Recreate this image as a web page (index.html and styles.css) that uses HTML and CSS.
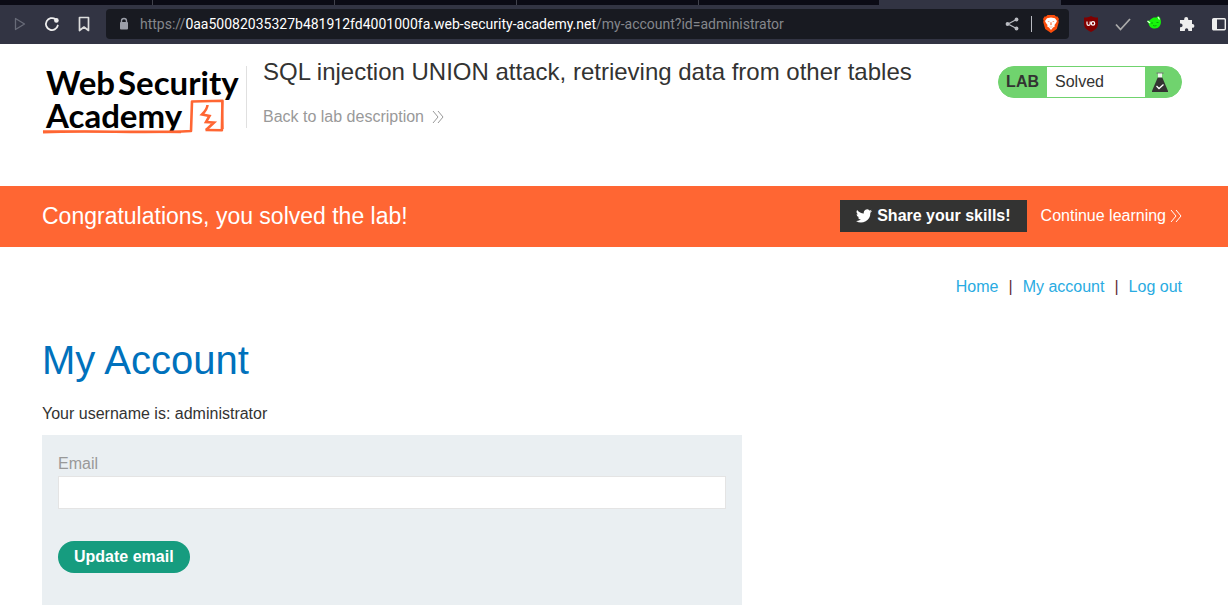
FILE: index.html
```html
<!DOCTYPE html>
<html lang="en">
<head>
<meta charset="utf-8">
<meta name="viewport" content="width=device-width, initial-scale=1">
<title>SQL injection UNION attack, retrieving data from other tables</title>
<link rel="stylesheet" href="styles.css">
</head>
<body>
<div class="browser">
  <div class="tabs"><span class="tab tab-first"></span><span class="tab"></span><span class="tab"></span><span class="tab"></span><span class="tab tab-last"></span><span class="tab tab-active"></span></div>
  <div class="toolbar">
    <div class="tools tools-left">
      <button class="tool" aria-label="Forward"><svg width="16" height="16" viewBox="0 0 16 16"><path d="M3.500 2.500v11l9-5.500z" fill="none" stroke="#686b78" stroke-width="1.300" stroke-linejoin="round"/></svg></button>
      <button class="tool" aria-label="Reload"><svg width="16" height="16" viewBox="0 0 16 16"><path d="M11.500 3.200A6 6 0 1 0 13.800 9.500" fill="none" stroke="#eee" stroke-width="1.800" stroke-linecap="round"/><circle cx="12.400" cy="4.400" r="2.300" fill="#eee"/></svg></button>
      <button class="tool" aria-label="Bookmark"><svg width="16" height="16" viewBox="0 0 16 16"><path d="M3.500 1.500h9v13L8 11l-4.500 3.500z" fill="none" stroke="#ddd" stroke-width="1.700" stroke-linejoin="round"/></svg></button>
    </div>
    <div class="address">
      <svg width="12" height="14" viewBox="0 0 12 14"><path d="M3.500 6V4a2.500 2.500 0 0 1 5 0v2" fill="none" stroke="#9b9ea8" stroke-width="1.400"/><rect x="2" y="5" width="8" height="7.500" rx="1" fill="#9b9ea8"/></svg>
      <span class="url">https://<span class="host">0aa50082035327b481912fd4001000fa.web-security-academy.net</span>/my-account?id=administrator</span>
      <button class="tool" aria-label="Share"><svg width="16" height="16" viewBox="0 0 16 16"><path d="M12.500 3.500L4 8l8.500 4.500" fill="none" stroke="#b9bbc1" stroke-width="1.300"/><circle cx="12.500" cy="3.500" r="1.900" fill="#b9bbc1"/><circle cx="3.500" cy="8" r="1.900" fill="#b9bbc1"/><circle cx="12.500" cy="12.500" r="1.900" fill="#b9bbc1"/></svg></button>
      <span class="rule"></span>
      <button class="tool" aria-label="Brave Shields"><svg width="16" height="18" viewBox="0 0 16 18"><path d="M4.500 0h7l1.500 1.600 1.500-.1L16 4l-.6 1.500.4 1.500-2 7L8 18l-5.800-4-2-7 .4-1.500L0 4l1.500-2.500 1.500.1z" fill="#fb4c0a"/><path d="M4 3.200L8 2.600l4 .6L14 6l-1 2-1.500 2 .3 1.500-1.800 1L8 15l-2-2.500-1.800-1 .3-1.500L3 8 2 6z" fill="#fff"/><path d="M4.500 6l2 .5-.4.800zM11.500 6l-2 .5.400.800zM7.700 7h.6l.3 2.500-.6 1-.6-1zM6 11.300l2 .6 2-.6-2 1.200z" fill="#fb4c0a"/></svg></button>
    </div>
    <div class="tools tools-right">
      <button class="tool" aria-label="uBlock Origin"><svg width="16" height="16" viewBox="0 0 16 16"><path d="M8 0c2 1.400 4 1.500 7 1.500v6C15 12 12 14 8 16 4 14 1 12 1 7.500v-6C4 1.500 6 1.400 8 0z" fill="#800000"/><path d="M4 5.500v2.200a1.600 1.600 0 0 0 3.200 0V5.500" fill="none" stroke="#fff" stroke-width="1.200"/><circle cx="10" cy="7.400" r="1.700" fill="none" stroke="#fff" stroke-width="1.200"/></svg></button>
      <button class="tool" aria-label="Checker"><svg width="16" height="16" viewBox="0 0 16 16"><path d="M1 8.500l4.500 5L15 3" fill="none" stroke="#aaa" stroke-width="1.800"/></svg></button>
      <button class="tool" aria-label="Green face extension"><svg width="16" height="16" viewBox="0 0 16 16"><path d="M4 3l2.500-1.500h3L11 0l2 1.500.8 3c.8 4.500-2 8-6 8C4.500 12.500 2 10.500 1.600 7.500L0 5l2.500-.5z" fill="#16f50a"/><path d="M.5 5l2.500 2M11 1l1.500 2.500" stroke="#dfffdc" stroke-width="1.300"/><path d="M4 7h2M9.500 6.500h2M6 9.500q2 1 3.500 0" fill="none" stroke="#0ba50a"/></svg></button>
      <button class="tool" aria-label="Extensions"><svg width="16" height="16" viewBox="0 0 16 16"><path d="M1 4h4.200V3a2 2 0 0 1 4 0v1H13v4h.5a1.900 1.900 0 0 1 0 3.800H13V15H9.300v-1a1.700 1.700 0 0 0-3.400 0v1H1v-3.800h.8a1.800 1.800 0 0 0 0-3.600H1z" fill="#eee"/></svg></button>
      <button class="tool" aria-label="Side panel"><svg width="16" height="16" viewBox="0 0 16 16"><rect x="1.700" y="2.700" width="12.600" height="11" rx="1" fill="none" stroke="#eee" stroke-width="1.400"/><path d="M2 3h4v10.500H2z" fill="#eee"/></svg></button>
    </div>
  </div>
</div>

<header class="lab-header">
  <a class="logo" href="#" aria-label="Web Security Academy">
    <span class="logo-line"><span>Web</span><span>Security</span></span>
    <span class="logo-line">Academy</span>
    <svg class="logo-mark" width="184" height="38" viewBox="0 0 184 38" fill="none" stroke="#ff6633"><path d="M1 33.200C50 31 100 34.500 149 32l1-29.500 30.500-.7-.6 29.500-16.400-.3" stroke-width="2.600" stroke-linejoin="round"/><path d="M1 32l138 1.500M180 2l1 28" stroke-width="1.400"/><path d="M165.500 6c-.2 3-1 5-5.500 9.500l7.500 1.500-3.500 6 8 .5-8 7.500" stroke-width="2.600"/></svg>
  </a>
  <div class="lab-title">
    <h2>SQL injection UNION attack, retrieving data from other tables</h2>
    <a class="back" href="#">Back to lab description <svg width="12" height="14" viewBox="0 0 12 14"><path d="M1 1l5 6-5 6M6 1l5 6-5 6" fill="none" stroke="#999"/></svg></a>
  </div>
  <div class="status"><strong>LAB</strong><span class="status-text">Solved</span>
    <svg width="36" height="30" viewBox="0 0 36 30"><path d="M11.500 5.500h7v1.200h-7z" fill="#777"/><path d="M13 6.500h4v5h-4z" fill="#eef5ee"/><path d="M12.700 10.500h4.600L23 24v1H7v-1z" fill="#333332"/><path d="M11.500 19l2.500 2.500 4.500-4" fill="none" stroke="#fff" stroke-width="1.300"/></svg>
  </div>
</header>

<section class="banner">
  <p class="banner-text">Congratulations, you solved the lab!</p>
  <button class="share"><svg width="16" height="14" viewBox="0 0 24 20"><path d="M24 2.400a9.800 9.800 0 0 1-2.800.8A4.900 4.900 0 0 0 23.300.5a9.900 9.900 0 0 1-3.100 1.200 4.900 4.900 0 0 0-8.400 4.500A14 14 0 0 1 1.700 1a4.900 4.900 0 0 0 1.500 6.600A4.900 4.900 0 0 1 1 7v.1a4.900 4.900 0 0 0 4 4.800 4.900 4.900 0 0 1-2.300.1 4.900 4.900 0 0 0 4.600 3.400A9.900 9.900 0 0 1 0 17.500a14 14 0 0 0 21.500-12.400A10 10 0 0 0 24 2.400z" fill="#fff"/></svg>Share your skills!</button>
  <a class="continue" href="#">Continue learning <svg width="12" height="14" viewBox="0 0 12 14"><path d="M1 1l5 6-5 6M6 1l5 6-5 6" fill="none" stroke="#fff"/></svg></a>
</section>

<main class="content">
  <nav class="links"><a href="#">Home</a><span>|</span><a href="#">My account</a><span>|</span><a href="#">Log out</a></nav>
  <h1>My Account</h1>
  <p class="username">Your username is: administrator</p>
  <form class="card">
    <label for="email">Email</label>
    <input id="email" type="email" name="email">
    <button class="update" type="button">Update email</button>
  </form>
</main>
</body>
</html>
```

FILE: styles.css
```css
* { box-sizing: border-box; }
body { margin: 0; background: #fff; color: #333332; font: 16px/24px "Liberation Sans", Arial, sans-serif; }
h1, h2, p { margin: 0; font-weight: 400; }
a { text-decoration: none; }
button { border: 0; padding: 0; background: none; font: inherit; cursor: pointer; }
svg { display: block; flex: none; }

.browser { background: #323443; overflow: hidden; }
.tabs { display: flex; height: 5px; background: #0b0b15; }
.tab { flex: 0 0 182px; border-right: 1px solid #41424c; }
.tab-first { flex-basis: 153px; }
.tab-last { flex-basis: 180px; border: 0; }
.tab-active { background: #323443; border: 0; }
.toolbar { display: flex; align-items: center; padding: 4px 0 5px; }
.tools { display: flex; gap: 16px; flex: none; }
.tools-left { padding: 0 14px 0 12px; }
.tools-right { padding: 0 1px 0 14px; }
.address { flex: 1; min-width: 0; height: 30px; display: flex; align-items: center; padding: 0 10px 0 12px; background: #181a21; border-radius: 4px; }
.url { flex: 1; min-width: 0; overflow: hidden; white-space: nowrap; margin-left: 10px; color: #85878c; font: 14px/20px Roboto, sans-serif; }
.host { color: #fff; }
.rule { width: 1px; height: 16px; margin: 0 11px; background: #b9bbc1; }

.lab-header { display: flex; align-items: flex-start; min-height: 142px; padding: 16px 46px 0 42px; }
.logo { position: relative; flex: none; width: 205px; height: 62px; margin-top: 6px; padding-left: 4px; border-right: 1px solid #e0e0e0; color: #000; font: 700 33px/33px Lato, sans-serif; }
.logo-line { display: flex; gap: 3px; }
.logo-mark { position: absolute; left: 0; top: 33px; }
.lab-title { flex: 1; margin-left: 16px; }
.lab-title h2 { font-size: 24px; line-height: 24px; }
.back { display: inline-flex; align-items: center; gap: 8px; margin-top: 21px; color: #999; }
.status { display: flex; align-items: center; height: 32px; margin-top: 6px; border: 1px solid #70d36e; border-radius: 16px; background: #70d36e; overflow: hidden; }
.status strong { padding: 0 8px 0 7px; }
.status-text { width: 98px; height: 30px; padding-left: 8px; background: #fff; line-height: 30px; }

.banner { display: flex; align-items: center; padding: 14px 46px 15px 42px; background: #ff6633; color: #fff; }
.banner-text { flex: 1; font-size: 23px; }
.share { display: flex; align-items: center; gap: 5px; height: 32px; padding: 0 16px; background: #333332; color: #fff; font-weight: 700; }
.continue { display: flex; align-items: center; gap: 4px; margin-left: 14px; color: #fff; }

.content { padding: 28px 46px 6px 42px; }
.links { display: flex; justify-content: flex-end; gap: 10px; }
.links a { color: #29abe2; }
.links span { color: #632f35; }
h1 { margin-top: 37px; color: #0071bc; font-size: 40px; line-height: 48px; }
.username { margin-top: 18px; }
.card { max-width: 700px; margin-top: 9px; padding: 16px 16px 32px; background: #eaeff2; }
.card label { display: block; color: #999; line-height: 25px; }
.card input { display: block; width: 100%; height: 33px; padding: 4px 8px; border: 1px solid #e4e4e4; background: #fff; font: inherit; }
.update { height: 32px; margin-top: 32px; padding: 0 16px; border-radius: 16px; background: #169c7f; color: #fff; font-weight: 700; }
```
